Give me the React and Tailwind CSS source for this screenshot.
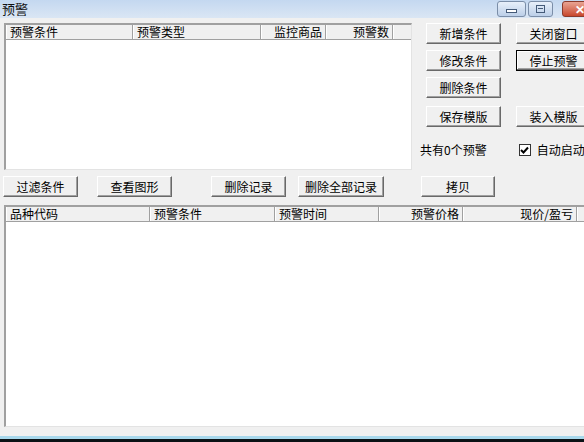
import React from "react";

const font = { fontFamily: '"Noto Sans CJK SC", "Noto Sans", sans-serif' };

function Btn({ label, w = "w-[75px]", def = false }) {
    return (
        <div
            className={`${w} h-[21px] shrink-0 flex items-center justify-center text-[12px] text-black bg-[#f0f0f0] border ${
                def
                    ? "border-black shadow-[inset_-1px_-1px_#696969,inset_1px_1px_#fff,inset_-2px_-2px_#a0a0a0]"
                    : "border-t-white border-l-white border-r-[#696969] border-b-[#696969] shadow-[inset_-1px_-1px_#a0a0a0]"
            }`}
        >
            {label}
        </div>
    );
}

function HeadCell({ label, w, right = false }) {
    return (
        <div
            className={`${w} h-full shrink-0 flex items-center pl-[3px] pr-[3px] border-r border-r-[#a0a0a0] border-l border-l-white text-[12px] leading-none ${
                right ? "justify-end" : "justify-start"
            }`}
        >
            {label}
        </div>
    );
}

function ListBox({ cols, className }) {
    return (
        <div className={`${className} shrink-0 bg-white border-t-2 border-l-2 border-t-[#a0a0a0] border-l-[#a0a0a0] border-b border-r border-b-[#e3e3e3] border-r-[#e3e3e3] overflow-hidden`}>
            <div className="h-[15px] flex bg-[#f0f0f0] border-b border-b-[#a0a0a0]">
                {cols.map((c, i) => (
                    <HeadCell key={i} {...c} />
                ))}
                <div className="flex-1 border-l border-l-white" />
            </div>
        </div>
    );
}

export default function App() {
    return (
        <div className="w-[584px] h-[442px] overflow-hidden bg-[#f0f0f0] flex flex-col text-black" style={font}>
            {/* title bar */}
            <div className="h-[18px] shrink-0 flex items-start bg-gradient-to-b from-[#c4d8f0] to-[#dae6f4] relative">
                <span className="text-[13px] leading-[17px] pl-[2px] text-[#111]">预警</span>
                <div className="absolute top-[1px] left-[497px] flex">
                    <div className="w-[29px] h-[16px] shrink-0 rounded-[3px] border border-[#7b8ea8] bg-gradient-to-b from-[#e8f0fa] to-[#bccfe8] flex items-center justify-center">
                        <div className="w-[11px] h-[4px] border border-[#445a78] bg-white mt-[3px]" />
                    </div>
                    <div className="w-[25px] h-[16px] shrink-0 ml-[2px] rounded-[3px] border border-[#7b8ea8] bg-gradient-to-b from-[#e8f0fa] to-[#bccfe8] flex items-center justify-center">
                        <div className="w-[9px] h-[8px] border border-[#445a78] flex items-center justify-center">
                            <div className="w-[5px] h-[2px] border-t border-[#445a78]" />
                        </div>
                    </div>
                    <div className="w-[40px] h-[16px] shrink-0 ml-[9px] rounded-[3px] border border-[#8a3b2c] bg-gradient-to-b from-[#e8a493] to-[#c7462c] flex items-center justify-start pl-[12px]">
                        <span className="text-white text-[12px] font-bold leading-none">✕</span>
                    </div>
                </div>
            </div>

            {/* top area */}
            <div className="flex pt-[5px] h-[152px] shrink-0">
                <ListBox
                    className="ml-[4px] w-[408px] h-[147px]"
                    cols={[
                        { label: "预警条件", w: "w-[127px]" },
                        { label: "预警类型", w: "w-[128px]" },
                        { label: "监控商品", w: "w-[65px]", right: true },
                        { label: "预警数", w: "w-[67px]", right: true },
                    ]}
                />
                <div className="ml-[14px] flex flex-col shrink-0 w-[170px]">
                    <div className="flex gap-[15px]">
                        <Btn label="新增条件" />
                        <Btn label="关闭窗口" />
                    </div>
                    <div className="flex gap-[15px] mt-[6px]">
                        <Btn label="修改条件" />
                        <Btn label="停止预警" def />
                    </div>
                    <div className="flex mt-[6px]">
                        <Btn label="删除条件" />
                    </div>
                    <div className="flex gap-[15px] mt-[8px]">
                        <Btn label="保存模版" />
                        <Btn label="装入模版" />
                    </div>
                    <div className="flex items-center mt-[14px] text-[12px]">
                        <span className="-ml-[6px] whitespace-nowrap">共有0个预警</span>
                        <div className="ml-[32px] w-[12px] h-[12px] shrink-0 bg-white border border-[#333] flex items-center justify-center">
                            <svg width="9" height="9" viewBox="0 0 9 9">
                                <path d="M1 4 L3.5 6.5 L8 1.5" stroke="#000" strokeWidth="2" fill="none" />
                            </svg>
                        </div>
                        <span className="ml-[6px] whitespace-nowrap">自动启动</span>
                    </div>
                </div>
            </div>

            {/* middle buttons */}
            <div className="flex h-[20px] mt-[6px] shrink-0 pl-[3px]">
                <Btn label="过滤条件" />
                <div className="ml-[19px]"><Btn label="查看图形" /></div>
                <div className="ml-[39px]"><Btn label="删除记录" /></div>
                <div className="ml-[12px]"><Btn label="删除全部记录" w="w-[86px]" /></div>
                <div className="ml-[37px]"><Btn label="拷贝" w="w-[74px]" /></div>
            </div>

            {/* bottom list */}
            <ListBox
                className="mt-[9px] ml-[4px] w-[590px] h-[222px]"
                cols={[
                    { label: "品种代码", w: "w-[144px]" },
                    { label: "预警条件", w: "w-[125px]" },
                    { label: "预警时间", w: "w-[104px]" },
                    { label: "预警价格", w: "w-[84px]", right: true },
                    { label: "现价/盈亏", w: "w-[114px]", right: true },
                ]}
            />

            <div className="flex-1" />
            <div className="h-[3px] shrink-0 bg-[#a8d8ec]" />
            <div className="h-[3px] shrink-0 bg-[#0b1216]" />
        </div>
    );
}
